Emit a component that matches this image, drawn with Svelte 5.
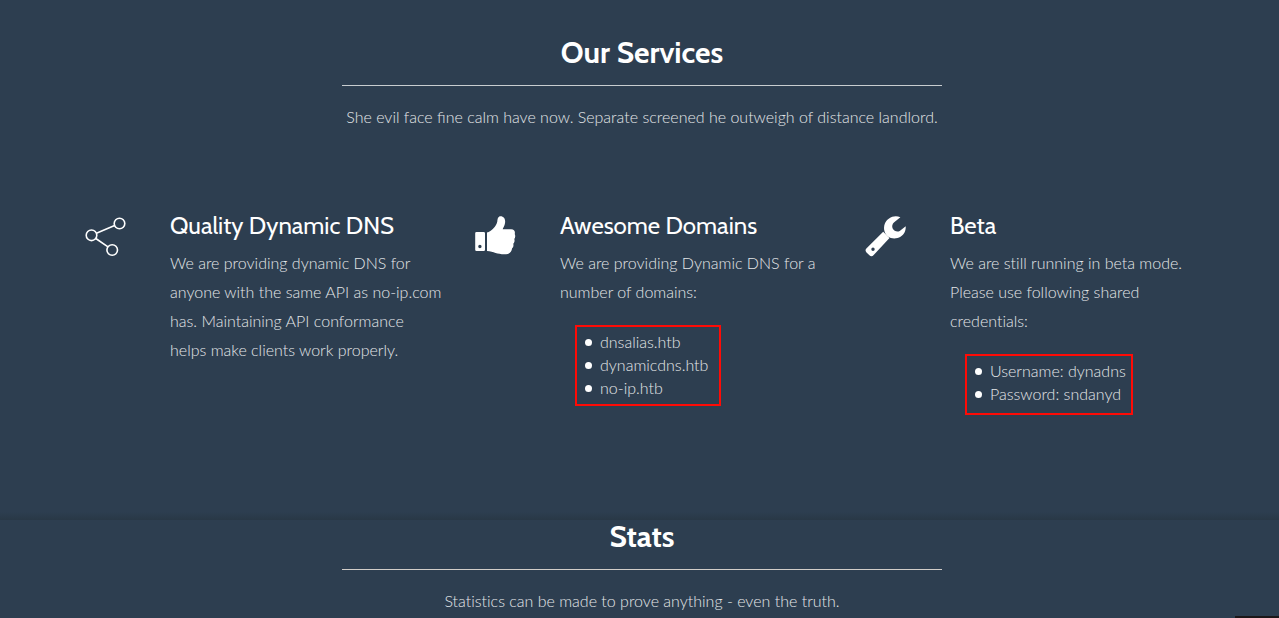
<script>
  const services = [
    {
      icon: 'share',
      title: 'Quality Dynamic DNS',
      text: 'We are providing dynamic DNS for\nanyone with the same API as no-ip.com\nhas. Maintaining API conformance\nhelps make clients work properly.',
      items: []
    },
    {
      icon: 'thumb',
      title: 'Awesome Domains',
      text: 'We are providing Dynamic DNS for a\nnumber of domains:',
      items: ['dnsalias.htb', 'dynamicdns.htb', 'no-ip.htb']
    },
    {
      icon: 'wrench',
      title: 'Beta',
      text: 'We are still running in beta mode.\nPlease use following shared\ncredentials:',
      items: ['Username: dynadns', 'Password: sndanyd']
    }
  ];
</script>

<main>
  <section class="services">
    <header>
      <h2>Our Services</h2>
      <p>She evil face fine calm have now. Separate screened he outweigh of distance landlord.</p>
    </header>
    <div class="columns">
      {#each services as service}
        <article>
          <svg viewBox="0 0 44 44" aria-hidden="true">
            {#if service.icon === 'share'}
              <g fill="none" stroke="#fff" stroke-width="1.6">
                <circle cx="7.5" cy="21.3" r="5.3" />
                <circle cx="35.5" cy="9.5" r="5.3" />
                <circle cx="28.2" cy="36" r="5.3" />
                <path d="M12.4 19.2 30.6 11.6M11.8 24.5 24 32.8" />
              </g>
            {:else if service.icon === 'thumb'}
              <path fill="#fff" fill-rule="evenodd" d="M2.500 18h7.200q1.300 0 1.300 1.300v16.400q0 1.300-1.300 1.300H2.500q-1.300 0-1.300-1.300V19.300q0-1.300 1.300-1.300zM5.900 30.800a1.700 1.700 0 1 0 0 3.400 1.700 1.700 0 0 0 0-3.400z" />
              <path fill="#fff" d="M13 18.500C17.500 17.500 22.500 12 23.300 7.500 23.500 4.500 24.200 2.200 26.500 2.200c4 0 5.500 4 4.200 8.300-.6 2-1.700 3.500-2 4.800h8.500c3 0 4.300 2.500 3.500 4.700.9 1.700.6 3.700-.4 4.900.6 2 .1 3.800-1 4.900.4 1.900 0 3.300-1.200 4.500-.6 4-2.600 5.900-7.800 5.900-7 0-10.500-2.700-17.300-3.300z" />
            {:else}
              <path fill="#fff" d="M36.400 3.200C30 .3 23 4 20.800 9.800 19 14.700 20.500 19.500 23.800 22.500c3.400 2.500 8.800 2.700 12.700.3 3.900-2.300 5.500-6.500 5.200-10.500l-6 4.600c-2.200 1.500-5.800.2-6.900-2.100-1.200-2.300-.5-5.200 1.400-6.600z" />
              <path fill="#fff" fill-rule="evenodd" d="m19.200 17.700 6.300 6.300L9.700 41q-2.100 2.200-4.300.3l-2.900-2.900Q.5 36.300 2.600 34.200zM9 33.600a1.700 1.700 0 1 0 0 3.400 1.700 1.700 0 0 0 0-3.400z" />
            {/if}
          </svg>
          <div class="copy">
            <h3>{service.title}</h3>
            <p>{service.text}</p>
            {#if service.items.length}
              <ul>
                {#each service.items as item}
                  <li>{item}</li>
                {/each}
              </ul>
            {/if}
          </div>
        </article>
      {/each}
    </div>
  </section>

  <section class="stats">
    <header>
      <h2>Stats</h2>
      <p>Statistics can be made to prove anything - even the truth.</p>
    </header>
    <div class="edge"></div>
  </section>
</main>

<style>
  :global(body) {
    background: #2d3e50;
  }
  main {
    color: #fff;
    font: 300 16px/29px Lato, "Open Sans", sans-serif;
    overflow: hidden;
  }
  section {
    padding-left: 5px;
  }
  .services {
    padding-top: 34px;
    padding-bottom: 105px;
    background: linear-gradient(transparent, #293846) bottom / 100% 8px no-repeat;
  }
  header {
    max-width: 600px;
    margin: 0 auto;
    text-align: center;
  }
  h2,
  h3,
  p,
  ul {
    margin: 0;
  }
  h2 {
    padding-bottom: 14px;
    border-bottom: 1px solid #c8cdd0;
    font: 700 30px/37px Cabin, Lato, sans-serif;
  }
  header p {
    padding-top: 16px;
  }
  p,
  li {
    color: #e4e6e8;
  }
  .columns {
    display: grid;
    grid-template-columns: repeat(3, 1fr);
    max-width: 1170px;
    margin: 81px auto 0;
  }
  article {
    display: flex;
    padding: 0 2px 0 27px;
  }
  svg {
    flex: none;
    width: 44px;
    height: 44px;
    margin: 2px 42px 0 0;
  }
  .copy,
  .stats {
    font-variant-ligatures: no-common-ligatures;
  }
  .copy p {
    white-space: pre-line;
  }
  h3 {
    margin-bottom: 8px;
    font: 400 24px/28px Cabin, Lato, sans-serif;
  }
  ul {
    width: fit-content;
    margin: 19px 0 0 15px;
    padding: 3px 11px 5px 8px;
    border: 2px solid #ff0b06;
    line-height: 23px;
    list-style: none;
  }
  article:last-child ul {
    padding: 3px 5px 8px 8px;
  }
  li {
    display: flex;
    align-items: center;
    gap: 8px;
  }
  li::before {
    content: "";
    width: 7px;
    height: 7px;
    margin-top: 2px;
    border-radius: 50%;
    background: #fff;
  }
  .stats header {
    margin-top: -2px;
  }
  .stats h2 {
    border-color: #d2cdc8;
  }
  .edge {
    width: 44px;
    height: 2px;
    margin: 1px 0 0 auto;
    background: #1c1719;
  }
</style>
